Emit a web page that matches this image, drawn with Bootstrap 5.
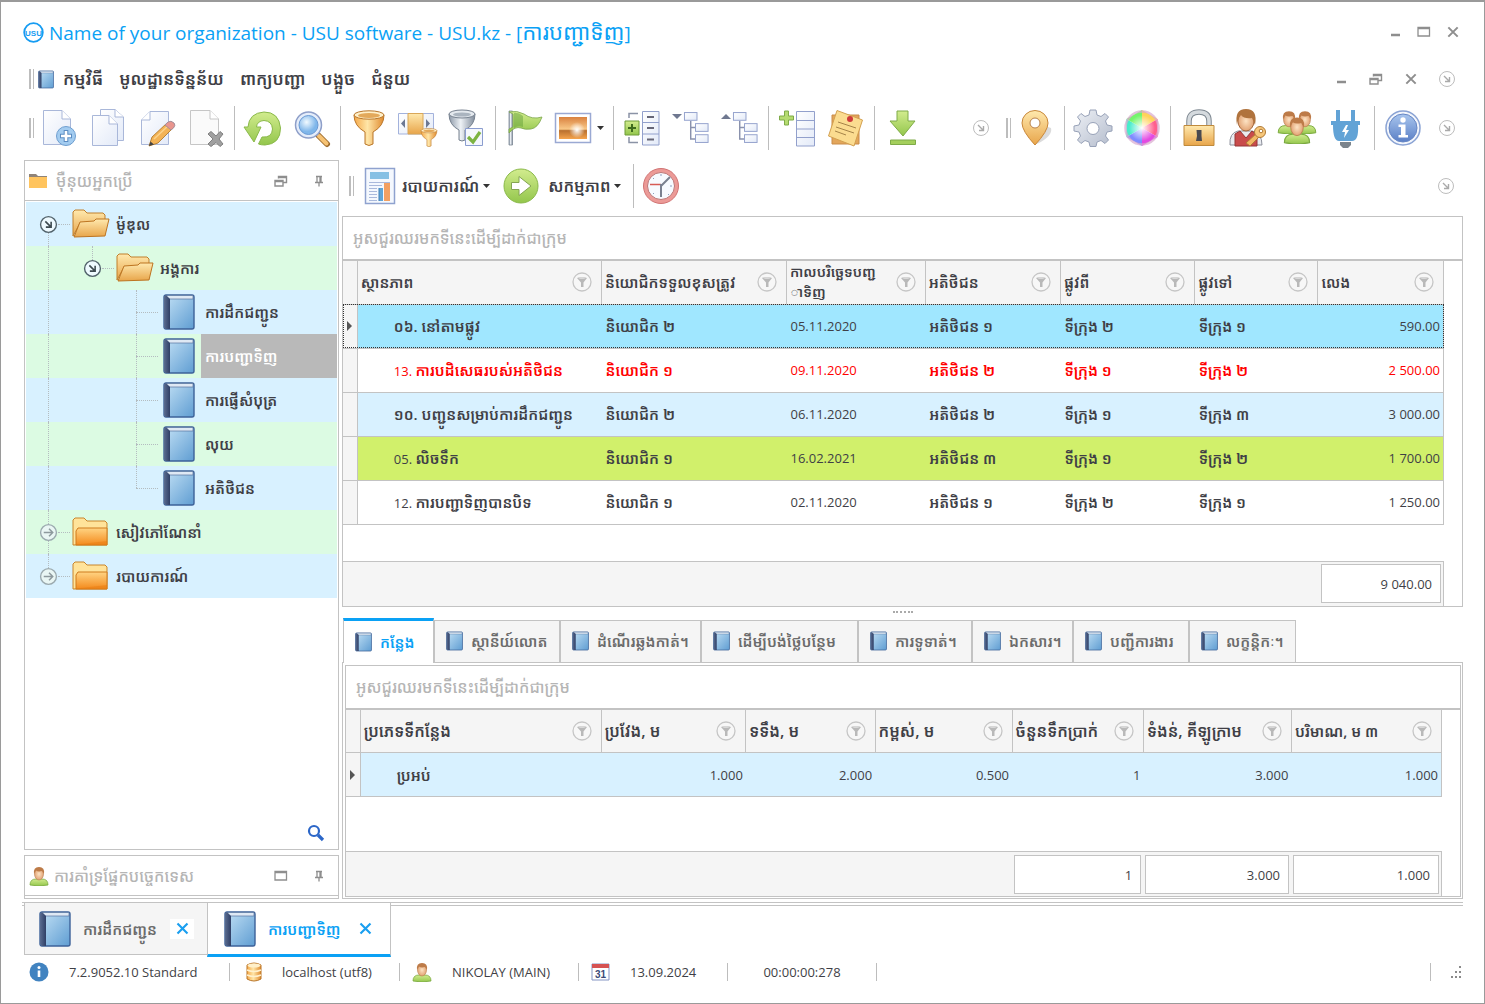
<!DOCTYPE html>
<html lang="km">
<head>
<meta charset="utf-8">
<meta name="viewport" content="width=device-width, initial-scale=1">
<title>USU software</title>
<link href="https://cdn.jsdelivr.net/npm/bootstrap@5.3.0/dist/css/bootstrap.min.css" rel="stylesheet">
<style>
:root{--line:#c3c3c3;--accent:#0aa1f5;--soft:#f5f5f5;--sky:#d8f1ff;--mint:#dcfbe3}
body{font-family:"Open Sans","Noto Sans","Noto Sans Khmer","Khmer OS",sans-serif;font-size:13px;line-height:18px;color:#3f3f46;background:#fff}
.app-window{min-height:100vh;border:1px solid #9a9a9a;border-top-width:2px}
button.plain{background:none;border:0;padding:0;color:inherit;display:inline-flex;align-items:center;justify-content:center;flex:none}
svg{flex:none;display:block}
.kh{font-size:15px;font-weight:600;white-space:nowrap}
.kh-lg{font-size:16px}
.kh-title{font-size:22px}
.kh-two{font-size:14px;line-height:20px}
.muted{color:#b5b5b5;font-weight:500}
.grey-btns{color:#8e8e8e}
.title-bar{height:60px;padding:0 20px 0 22px}
.title-bar h1{font-size:19px;line-height:26px;font-weight:400;color:var(--accent);margin:0 auto 0 5px;white-space:nowrap}
.win-btns{gap:7px}
.menu-bar{height:34px;padding:0 17px 0 28px}
.menu-links{gap:16px;margin:0 auto 0 9px}
.menu-links a{color:#3f3f46;text-decoration:none;font-size:17px}
.menu-btns{gap:13px;padding-right:5px}
.more-slot{width:40px}
.grip{width:5px;height:20px;border:solid #bdbdbd;border-width:0 1px;border-left-width:2px;flex:none}
.tool-bar{height:64px;padding:0 17px 0 28px}
.tool{width:49px;height:44px}
.tool-wide{width:61px;height:44px;gap:5px}
.sep{width:8px;height:44px;display:flex;justify-content:center;flex:none}
.sep::before{content:"";width:1px;background:#bdbdbd}
.work{padding:0 21px 0 23px;gap:3px}
.main-col{min-width:0}
.side{width:315px;flex:none;gap:5px}
.box{border:1px solid var(--line)}
.pane-head{height:40px;padding:0 12px 0 4px;gap:5px;border-bottom:1px solid var(--line)}
.pane-head .kh{font-size:16px}
.pane-btns{gap:24px}
.tree{padding:1px}
.tree-row{height:44px;background:var(--sky)}
.tree-row:nth-child(even){background:var(--mint)}
.tree-row .kh{padding-left:6px}
.tree-row .leaf{margin:0 6px 0 5px}
.tree-row .open{margin-left:2px}
.tree-row .shut{margin:0 2px}
.tree-row .leaf + .kh{padding-left:4px}
.guide{width:44px;height:44px;position:relative;display:flex;align-items:center;justify-content:center;flex:none}
.guide svg{position:relative}
.gv::before,.gt::before,.gb::before{content:"";position:absolute;left:22px;top:0;bottom:0;border-left:1px dotted #b4bcc0}
.gt::before{bottom:50%}
.gb::before{top:50%}
.gh::after{content:"";position:absolute;left:22px;right:0;top:22px;border-top:1px dotted #b4bcc0}
.guide.round::after{left:32px}
.picked{background:#b9b9b9;color:#fff;align-self:stretch;flex:1;display:flex;align-items:center}
.find-row{height:32px;padding-right:13px}
.low-pane{padding-bottom:2px}
.report-bar{height:52px;padding:0 0 0 7px;margin-bottom:4px}
.report-bar .kh{font-size:16px}
.group-hint{height:44px;padding:0 10px;border-bottom:2px solid var(--line)}
.grid-wrap{padding-right:18px}
.grid-tbl{width:100%;table-layout:fixed;border-collapse:collapse;margin:0}
.grid-tbl th,.grid-tbl td{padding:0 4px;overflow:hidden;white-space:nowrap}
.grid-tbl th{height:43px;background:var(--soft);border:1px solid var(--line);border-top:0;border-left-width:0;padding:0 9px 0 3px}
.grid-tbl tbody tr{height:44px;border-bottom:1px solid var(--line)}
.grid-tbl tbody{border-right:1px solid var(--line)}
.grid-tbl td.mark-col{background:var(--soft);border-right:1px solid var(--line);padding:0}
.grid-tbl td.mark-col svg{margin:auto}
.grid-tbl td.lead-cell{padding-left:36px}
.grid-tbl td.num{text-align:right;padding-right:3px}
.r-focus{background:#a0e7ff;outline:1px dotted #333;outline-offset:-1px}
.r-red{color:#f00}
.r-sky{background:var(--sky)}
.r-lime{background:#d1f06b}
.foot{height:45px;background:var(--soft);border-top:1px solid var(--line);border-right:1px solid var(--line);margin-right:18px}
.grid-tbl.foot-tbl td{height:44px;padding:0 2px}
.sum{border:1px solid var(--line);background:#fff;height:39px;line-height:39px;padding-right:8px;text-align:right}
.splitter{height:11px;display:flex;justify-content:center;align-items:center}
.splitter i{width:20px;border-top:2px dotted #aaa}
.sub-tabs{height:44px;align-items:flex-end;position:relative;padding-left:1px}
.sub-tabs button{height:42px;border:1px solid var(--line);border-bottom:0;background:var(--soft);color:#6b6b6b;justify-content:flex-start;padding:0 0 0 11px;gap:8px;overflow:hidden}
.sub-tabs button.on{height:45px;border-top:3px solid var(--accent);background:#fff;color:var(--accent);margin-bottom:-1px}
.w91{width:91px}.w126{width:126px}.w141{width:141px}.w157{width:157px}.w114{width:114px}.w101{width:101px}.w116{width:116px}.w107{width:107px}
.detail{border:1px solid var(--line);padding:2px 1px 1px 2px}
.filler{min-height:36px}
.doc-strip{margin:3px 21px 0 21px;border-top:1px solid var(--line);position:relative}
.doc-strip::before{content:"";position:absolute;left:0;right:0;top:2px;border-top:1px solid var(--line)}
.doc-tabs{position:relative;padding-left:2px}
.doc-tab{height:52px;border:1px solid var(--line);border-top:0;background:var(--soft);color:#6b6b6b;padding:0 13px 0 14px;width:184px}
.doc-tab.on{height:54px;background:#fff;color:var(--accent);border-bottom:3px solid var(--accent);width:184px;margin-left:-1px;padding-left:16px}
.doc-tab .plain{background:#fff;width:24px;height:20px;color:#1a9ff0}
.status{height:30px;padding:0 21px 0 28px}
.status .cell{border-right:1px solid #bdbdbd;height:18px;display:flex;align-items:center;flex:none}
</style>
</head>
<body>
<svg width="0" height="0" class="position-absolute" aria-hidden="true">
<defs>
<linearGradient id="gPage" x2="1" y2="1"><stop stop-color="#fff"/><stop offset="1" stop-color="#e3eaf8"/></linearGradient>
<linearGradient id="gBlue" x2="1" y2="1"><stop stop-color="#c4e2f6"/><stop offset="1" stop-color="#5f9dd2"/></linearGradient>
<linearGradient id="gSpine"><stop stop-color="#5a6c90"/><stop offset="1" stop-color="#2f3f66"/></linearGradient>
<linearGradient id="gGold" x2="0" y2="1"><stop stop-color="#ffe9ae"/><stop offset="1" stop-color="#e8a54a"/></linearGradient>
<linearGradient id="gGoldH"><stop stop-color="#f5a848"/><stop offset=".45" stop-color="#ffe6a8"/><stop offset="1" stop-color="#e08a2e"/></linearGradient>
<linearGradient id="gGreen" x2="0" y2="1"><stop stop-color="#d2ec8e"/><stop offset="1" stop-color="#93c64c"/></linearGradient>
<linearGradient id="gSteel"><stop stop-color="#8d99a8"/><stop offset=".45" stop-color="#eef2f6"/><stop offset="1" stop-color="#7f8b9a"/></linearGradient>
<linearGradient id="gGear" x2="1" y2="1"><stop stop-color="#eef1f6"/><stop offset="1" stop-color="#b4bccc"/></linearGradient>
<linearGradient id="gOrange" x2="0" y2="1"><stop stop-color="#ffd483"/><stop offset="1" stop-color="#f48a1c"/></linearGradient>
<linearGradient id="gInfo" x2="0" y2="1"><stop stop-color="#a9c6ee"/><stop offset="1" stop-color="#5a7fc6"/></linearGradient>
<linearGradient id="gSun" x2="0" y2="1"><stop stop-color="#d9813f"/><stop offset=".55" stop-color="#f9c887"/><stop offset=".62" stop-color="#b9702f"/><stop offset="1" stop-color="#f5a44d"/></linearGradient>
<radialGradient id="gFace"><stop stop-color="#fde3c4"/><stop offset="1" stop-color="#e2a374"/></radialGradient>
<radialGradient id="gLens" cx=".4" cy=".35"><stop stop-color="#f2faff"/><stop offset="1" stop-color="#7fb6ea"/></radialGradient>
<radialGradient id="gWhite"><stop stop-color="#fff"/><stop offset="1" stop-color="#fff" stop-opacity="0"/></radialGradient>
<symbol id="book" viewBox="0 0 32 36"><rect x="1" y="1" width="30" height="34" rx="2" fill="url(#gBlue)" stroke="#3d6299" stroke-width="1.400"/><path d="M2 5 4 1.500H30V5Z" fill="#dfe9f4" stroke="#58749e" stroke-width=".7"/><path d="M1 2.500 3 1 7 5V35H2.500L1 33Z" fill="url(#gSpine)"/></symbol>
<symbol id="openf" viewBox="0 0 38 30"><path d="M1 27V3L3 1H12L15 4H31L33 6V14H8Z" fill="url(#gGold)" stroke="#c07f2b"/><path d="M2 28 8 13 22 12 24 10H37L33 27Z" fill="url(#gGold)" stroke="#bd7421"/></symbol>
<symbol id="closedf" viewBox="0 0 36 30"><path d="M1 28V3L3 1H12L15 4H33L35 6V28Z" fill="#ffe39a" stroke="#c9852a"/><path d="M4 28V14L6 11H35V28Z" fill="url(#gOrange)" stroke="#cf7a1c"/><path d="M1 28H35V24L1 28Z" fill="#e77c12" opacity=".5"/></symbol>
<symbol id="more" viewBox="0 0 18 18"><circle cx="9" cy="9" r="7.500" fill="#fff" stroke="#bdbdbd"/><path d="M6 6 11 11M7 11.500H11.500V7" fill="none" stroke="#aaa" stroke-width="1.400"/></symbol>
<symbol id="expd" viewBox="0 0 18 18"><circle cx="9" cy="9" r="7.500" fill="#eefaff" stroke="#50616a" stroke-width="1.300"/><path d="M6 6 11 11M6.500 11.500H11.500V6.500" fill="none" stroke="#3d4a50" stroke-width="1.500"/></symbol>
<symbol id="expr" viewBox="0 0 18 18"><circle cx="9" cy="9" r="7.500" fill="#e9f6f4" stroke="#9aa9ae" stroke-width="1.300"/><path d="M4.500 9H13M9.500 5.500 13 9 9.500 12.500" fill="none" stroke="#8d999d" stroke-width="1.400"/></symbol>
<symbol id="filt" viewBox="0 0 20 20"><circle cx="10" cy="10" r="9" fill="#f7f7f7" stroke="#c6c6c6" stroke-width="1.300"/><path d="M5 6Q10 4 15 6L11.500 10.500V15H9V10.500Z" fill="#b9b9b9"/><ellipse cx="10" cy="6" rx="3.500" ry=".7" fill="#e2e2e2"/></symbol>
<symbol id="cascade" viewBox="0 0 14 12"><path d="M4.500 3.500V1.500H12.500V7.500H9.500M4.500 2.500H12.500M1 5.500H9V11H1ZM1 6.500H9" fill="none" stroke="#8e8e8e" stroke-width="1.400"/></symbol>
<symbol id="maxi" viewBox="0 0 14 12"><path d="M1 1.500H12.500V10H1ZM1 2.500H12.500" fill="none" stroke="#8e8e8e" stroke-width="1.300"/></symbol>
<symbol id="mini" viewBox="0 0 14 12"><path d="M3 9H12" stroke="#8e8e8e" stroke-width="2.500"/></symbol>
<symbol id="cross" viewBox="0 0 12 12"><path d="M2 2 10 10M10 2 2 10" stroke="currentColor" stroke-width="1.700"/></symbol>
<symbol id="pin" viewBox="0 0 12 12"><path d="M3 1.500H9M4 1.500V7M8 1.500V7M7 2V7M2 7.500H10M6 7V11.500" fill="none" stroke="#8e8e8e" stroke-width="1.300"/></symbol>
<symbol id="caret" viewBox="0 0 7 4"><path d="M0 0H7L3.500 4Z" fill="#333"/></symbol>
<symbol id="rowmark" viewBox="0 0 5 10"><path d="M0 0 5 5 0 10Z" fill="#555"/></symbol>
<symbol id="page" viewBox="0 0 40 40"><path d="M4.500 2.500H23L31.500 11V36.500H4.500Z" fill="url(#gPage)" stroke="#a9b7d9"/><path d="M23 2.500V11H31.500" fill="#fff" stroke="#a9b7d9"/></symbol>
<symbol id="user" viewBox="0 0 20 20"><path d="M1 19Q1 13 7 13H13Q19 13 19 19Q10 21 1 19Z" fill="url(#gGreen)" stroke="#7aa93f" stroke-width=".8"/><ellipse cx="10" cy="8" rx="4.500" ry="6" fill="url(#gFace)" stroke="#b97c4f" stroke-width=".6"/><path d="M5 8Q4 1 10 1Q16 1 15 8L13 5Q9 6 7 4.500Z" fill="#bd7b48"/></symbol>
<symbol id="funnel" viewBox="0 0 32 36"><path d="M1 5Q1 16 12 22V34Q16 37 20 34V22Q31 16 31 5Z" fill="url(#gGoldH)" stroke="#b9762a"/><ellipse cx="16" cy="5" rx="15" ry="4.200" fill="#fff0c9" stroke="#b9762a"/><ellipse cx="16" cy="5.500" rx="11" ry="2.500" fill="#e3a95b"/></symbol>
<symbol id="nodes" viewBox="0 0 28 34"><path d="M8 10V29H13M8 17H13" fill="none" stroke="#8a92ad" stroke-width="1.500"/><g fill="url(#gPage)" stroke="#92a0cc"><rect x="1.500" y="1.500" width="13" height="8"/><rect x="13" y="13" width="13" height="8"/><rect x="13" y="24.500" width="13" height="8"/></g></symbol>
</defs>
</svg>
<div class="app-window d-flex flex-column">

<header class="title-bar d-flex align-items-center">
  <svg width="21" height="21" viewBox="0 0 21 21"><circle cx="10.500" cy="10.500" r="9.300" fill="#fff" stroke="#169cf2" stroke-width="1.800"/><text x="10.500" y="13.500" font-family="Liberation Sans" font-weight="700" font-size="8" fill="#169cf2" text-anchor="middle">USU</text></svg>
  <h1>Name of your organization - USU software - USU.kz - [<span class="kh-title">ការបញ្ជាទិញ</span>]</h1>
  <div class="win-btns grey-btns d-flex">
    <button class="plain p-1" aria-label="Minimize"><svg width="14" height="12"><use href="#mini"/></svg></button>
    <button class="plain p-1" aria-label="Maximize"><svg width="14" height="12"><use href="#maxi"/></svg></button>
    <button class="plain p-1" aria-label="Close"><svg width="14" height="14"><use href="#cross"/></svg></button>
  </div>
</header>

<nav class="menu-bar d-flex align-items-center">
  <span class="grip"></span>
  <svg width="16" height="19" class="ms-1"><use href="#book"/></svg>
  <div class="menu-links d-flex">
    <a href="#" class="kh">កម្មវិធី</a><a href="#" class="kh">មូលដ្ឋានទិន្នន័យ</a><a href="#" class="kh">ពាក្យបញ្ជា</a><a href="#" class="kh">បង្អួច</a><a href="#" class="kh">ជំនួយ</a>
  </div>
  <div class="menu-btns grey-btns d-flex">
    <button class="plain px-1" aria-label="Minimize document"><svg width="14" height="12"><use href="#mini"/></svg></button>
    <button class="plain px-1" aria-label="Restore document"><svg width="14" height="12"><use href="#cascade"/></svg></button>
    <button class="plain px-1" aria-label="Close document"><svg width="14" height="14"><use href="#cross"/></svg></button>
  </div>
  <button class="plain more-slot" aria-label="More"><svg width="18" height="18"><use href="#more"/></svg></button>
</nav>

<div class="tool-bar d-flex align-items-center">
  <span class="grip"></span>
  <button class="plain tool" aria-label="Add"><svg width="40" height="40" viewBox="0 0 40 40"><use href="#page" width="40" height="40"/><circle cx="27" cy="28" r="9.500" fill="#a3ccf0" stroke="#6f9fd0"/><path d="M27 22V34M21 28H33" stroke="#5a8cc2" stroke-width="4.600"/><path d="M27 23V33M22 28H32" stroke="#fff" stroke-width="2.600"/></svg></button>
  <button class="plain tool" aria-label="Copy"><svg width="40" height="40" viewBox="0 0 40 40"><path d="M12.500 1.500H27L35.500 9V32.500H12.500Z" fill="url(#gPage)" stroke="#a9b7d9"/><path d="M27 1.500V9H35.500" fill="#fff" stroke="#a9b7d9"/><path d="M4.500 7.500H21L29.500 16V37.500H4.500Z" fill="url(#gPage)" stroke="#a9b7d9"/><path d="M21 7.500V16H29.500" fill="#fff" stroke="#a9b7d9"/></svg></button>
  <button class="plain tool" aria-label="Edit"><svg width="40" height="40" viewBox="0 0 40 40"><path d="M13 3.500H31.500V36.500H4.500V12Z" fill="url(#gPage)" stroke="#a9b7d9"/><path d="M13 3.500V12H4.500" fill="#fff" stroke="#a9b7d9"/><path d="M12 38 15 29 30 15 36 20 21 35Z" fill="#f3b356" stroke="#a8701f" stroke-width=".8"/><path d="M17 31 32 17" stroke="#fbd38c" stroke-width="1.500"/><path d="M12 38 13.500 33.500 17 36.500Z" fill="#444"/><path d="M28 17 31 14Q34 12 37 15 39 17 36.500 20L34 22Z" fill="#e9958e" stroke="#a58e99"/></svg></button>
  <button class="plain tool" aria-label="Delete"><svg width="40" height="40" viewBox="0 0 40 40"><path d="M4.500 2.500H24L32.500 11V36.500H4.500Z" fill="#fafafa" stroke="#c6c6c6"/><path d="M24 2.500V11H32.500" fill="#fff" stroke="#c6c6c6"/><path d="M22 26 25 23.500 30 28 34 23.500 37 26 33 31 37 36 34 38.500 30 34.500 25 38.500 22 36 27 31Z" fill="#a0a0a0" stroke="#7f7f7f"/></svg></button>
  <span class="sep"></span>
  <button class="plain tool" aria-label="Refresh"><svg width="40" height="40" viewBox="0 0 40 40"><path d="M5 19Q6 5 21 4 36 4 37.500 20 37.500 36 22 37 18 37 15.500 36L19 29Q29 30 29.500 21 29 13 21 12.500 14 13 13.500 19H18L11 34 1 19Z" fill="url(#gGreen)" stroke="#8ab94a"/></svg></button>
  <button class="plain tool" aria-label="Search"><svg width="40" height="40" viewBox="0 0 40 40"><path d="M26 27 35 36" stroke="#9c6a2c" stroke-width="6" stroke-linecap="round"/><path d="M27 28 34.500 35.500" stroke="#f6c273" stroke-width="4" stroke-linecap="round"/><circle cx="16.500" cy="17" r="13" fill="#e5edfa" stroke="#8e9fc9" stroke-width="1.500"/><circle cx="16.500" cy="17" r="9.500" fill="url(#gLens)" stroke="#6b9ad4"/></svg></button>
  <span class="sep"></span>
  <button class="plain tool" aria-label="Filter"><svg width="32" height="36"><use href="#funnel"/></svg></button>
  <button class="plain tool" aria-label="Filter column"><svg width="42" height="40" viewBox="0 0 42 40"><path d="M1.500 5.500H36.500V26H1.500Z" fill="url(#gPage)" stroke="#a3b2dc"/><path d="M11 5.500H26V26H11Z" fill="url(#gGold)" stroke="#d9a758"/><path d="M8 11V20L4 15.500ZM29 11V20L33 15.500Z" fill="#6c7894"/><use href="#funnel" x="23" y="20" width="18" height="19"/></svg></button>
  <button class="plain tool" aria-label="Filter check"><svg width="40" height="40" viewBox="0 0 40 40"><path d="M2 6Q2 17 12 22V32Q15 34 18 32V22Q28 17 28 6Z" fill="url(#gSteel)" stroke="#76818f"/><ellipse cx="15" cy="6" rx="13" ry="4" fill="#e4e9ee" stroke="#76818f"/><ellipse cx="15" cy="6.500" rx="9" ry="2" fill="#aab4bf"/><path d="M18.500 20.500H35.500V37.500H18.500Z" fill="#f4f7fd" stroke="#8b9dcf"/><path d="M21 29 26 34 33 24" fill="none" stroke="#7cb342" stroke-width="3.200"/></svg></button>
  <span class="sep"></span>
  <button class="plain tool" aria-label="Flag"><svg width="40" height="40" viewBox="0 0 40 40"><path d="M5 3H8.500V37H5Z" fill="url(#gSteel)" stroke="#7c8894" stroke-width=".8"/><path d="M5 4Q13 2 20 6 28 12 38 9Q34 20 27 21 21 22 17 20 11 18 5 25V21L9 19V6Z" fill="url(#gGreen)" stroke="#7ba64b" stroke-width=".8"/><path d="M10 5Q14 4 19 8V19Q14 17 10 20Z" fill="#5e9c35" opacity=".45"/></svg></button>
  <button class="plain tool-wide" aria-label="Image"><svg width="38" height="34" viewBox="0 0 38 34"><path d="M1.500 2.500H36.500V31.500H1.500Z" fill="#fff" stroke="#9aa9d3" stroke-width="1.500"/><path d="M5 6H33V28H5Z" fill="url(#gSun)"/><circle cx="23" cy="19" r="8" fill="url(#gWhite)"/></svg><svg width="7" height="4"><use href="#caret"/></svg></button>
  <span class="sep"></span>
  <button class="plain tool" aria-label="Expand groups"><svg width="40" height="40" viewBox="0 0 40 40"><path d="M7 10V5.500H16M7 29V34.500H16" fill="none" stroke="#8b93a6" stroke-width="1.500"/><path d="M3 13H17V27H3Z" fill="url(#gGreen)" stroke="#6f9c39"/><path d="M10 16V24M6 20H14" stroke="#3e6a1e" stroke-width="2"/><path d="M20.500 3.500H37V37H20.500ZM20.500 14.500H37M20.500 26H37" fill="url(#gPage)" stroke="#92a0cc"/><path d="M25 9H32M25 20H32M25 31.500H32" stroke="#667" stroke-width="2"/></svg></button>
  <button class="plain tool" aria-label="Expand tree"><svg width="40" height="40" viewBox="0 0 40 40"><path d="M1 6H11L6 11Z" fill="#6f7890"/><use href="#nodes" x="12" y="3" width="27" height="33"/></svg></button>
  <button class="plain tool" aria-label="Collapse tree"><svg width="40" height="40" viewBox="0 0 40 40"><path d="M1 11H11L6 6Z" fill="#6f7890"/><use href="#nodes" x="12" y="3" width="27" height="33"/></svg></button>
  <span class="sep"></span>
  <button class="plain tool" aria-label="Add column"><svg width="40" height="40" viewBox="0 0 40 40"><path d="M7.500 3H11.500V8H16.500V12H11.500V17H7.500V12H2.500V8H7.500Z" fill="#b5db70" stroke="#7fab48"/><path d="M19.500 3.500H37.500V38H19.500ZM19.500 12.500H37.500M19.500 21H37.500M19.500 29.500H37.500" fill="url(#gPage)" stroke="#92a0cc"/></svg></button>
  <button class="plain tool" aria-label="Notes"><svg width="40" height="40" viewBox="0 0 40 40"><path d="M6 7H33V36H6Z" fill="#e3a65b" stroke="#c98c48"/><path d="M11 2.500 36.500 12 28 38 2.500 28Z" fill="#fbdc90" stroke="#d3a050"/><path d="M12 14 30 20M10 19 28 25M9 23 20 27" stroke="#a58348"/><circle cx="24" cy="11" r="3" fill="#cf3b3b"/></svg></button>
  <span class="sep"></span>
  <button class="plain tool" aria-label="Download"><svg width="30" height="38" viewBox="0 0 30 38"><path d="M9 2H20V12H27L15 27 2 12H9Z" fill="url(#gGreen)" stroke="#7fab48"/><path d="M2.500 31H27.500V35.500H2.500Z" fill="#a4cf5c" stroke="#7fab48"/></svg></button>
  <button class="plain ms-auto" aria-label="More tools"><svg width="18" height="18"><use href="#more"/></svg></button>
  <span class="grip ms-3"></span>
  <button class="plain tool" aria-label="Location"><svg width="34" height="40" viewBox="0 0 34 40"><path d="M18 36Q34 28 32 20L26 18Z" fill="#999" opacity=".35"/><path d="M16 37Q3 23 3 15A13 12.500 0 0 1 29 15Q29 23 16 37Z" fill="url(#gGold)" stroke="#c8873a"/><circle cx="16" cy="15" r="5" fill="#fff" stroke="#b9824a"/></svg></button>
  <span class="sep"></span>
  <button class="plain tool" aria-label="Settings"><svg width="40" height="40" viewBox="0 0 40 40"><path d="M17 2H23L24 7 28 8.500 32 5.500 35.500 9 32.500 13 34 17 39 18V23L34 24 32.500 28 35.500 32 32 35.500 28 32.500 24 34 23 38.500H17L16 34 12 32.500 8 35.500 4.500 32 7.500 28 6 24 1 23V18L6 17 7.500 13 4.500 9 8 5.500 12 8.500 16 7Z" fill="url(#gGear)" stroke="#98a2b8"/><circle cx="20" cy="20.500" r="6" fill="#fff" stroke="#98a2b8"/></svg></button>
  <button class="plain tool" aria-label="Colors"><svg width="38" height="38" viewBox="-19 -19 38 38"><path d="M0 0V-18L15.600-9Z" fill="#ffd35a"/><path d="M0 0 15.600-9V9Z" fill="#ff5f8d"/><path d="M0 0 15.600 9 0 18Z" fill="#e34ae2"/><path d="M0 0V18L-15.600 9Z" fill="#7f8cff"/><path d="M0 0-15.600 9V-9Z" fill="#48eccb"/><path d="M0 0-15.600-9 0-18Z" fill="#74f56c"/><circle r="16.500" fill="none" stroke="#d9a9cf" stroke-width="2.500" opacity=".7"/><circle r="13" fill="url(#gWhite)"/></svg></button>
  <span class="sep"></span>
  <button class="plain tool" aria-label="Lock"><svg width="34" height="40" viewBox="0 0 34 40"><path d="M7 18V13Q7 4 17 4T27 13V18" fill="none" stroke="#7d8790" stroke-width="5.500"/><path d="M7 18V13Q7 4 17 4T27 13V18" fill="none" stroke="#d5dade" stroke-width="3.500"/><path d="M2 17.500H32V37.500H2Z" fill="url(#gGold)" stroke="#c08a3c"/><path d="M14.500 22H19.500V28L20 33H14L15 28Z" fill="#4a4a50"/></svg></button>
  <button class="plain tool" aria-label="User rights"><svg width="40" height="40" viewBox="0 0 40 40"><path d="M2 37Q1 25 10 23H24Q34 25 34 37Z" fill="#e9ebf0" stroke="#8c8f9a"/><path d="M7 38V26L12 23 18 30 24 23 29 27V38Z" fill="#c94b4b" stroke="#963737"/><ellipse cx="18" cy="13" rx="8" ry="10" fill="url(#gFace)" stroke="#a5683c"/><path d="M9 17Q6 1 18 1Q30 1 27 17L24 10Q16 11 13 7 10 10 9 17Z" fill="#b0733d"/><path d="M18 35 30 24 33 27 22 38Z" fill="#f2b765" stroke="#b07a35"/><circle cx="32" cy="24" r="5.500" fill="#f7c77b" stroke="#b07a35"/><circle cx="33" cy="23" r="1.800" fill="#fff" stroke="#b07a35"/></svg></button>
  <button class="plain tool" aria-label="Users"><svg width="40" height="40" viewBox="0 0 40 40"><use href="#user" x="0" y="2" width="24" height="24"/><use href="#user" x="16" y="2" width="24" height="24"/><use href="#user" x="6" y="8" width="28" height="28"/></svg></button>
  <button class="plain tool" aria-label="Connection"><svg width="40" height="42" viewBox="0 0 40 42"><path d="M12 3V15M27 3V15" stroke="#62a3d6" stroke-width="4"/><path d="M5 14H34V18H32Q33 34 26 34H13Q7 34 7 18H5Z" fill="#62a3d6"/><path d="M14 35H25V38L22 41H17L14 38Z" fill="#7b848c"/><path d="M20 18 16 25H19L18 31 23 23H20L22 18Z" fill="#fff"/></svg></button>
  <span class="sep"></span>
  <button class="plain tool" aria-label="Info"><svg width="38" height="38" viewBox="0 0 38 38"><circle cx="19" cy="19" r="17" fill="#f3f6fc" stroke="#8aa3d4" stroke-width="1.500"/><circle cx="19" cy="19" r="14" fill="url(#gInfo)" stroke="#6787c4"/><circle cx="19" cy="11" r="2.700" fill="#fff"/><path d="M14.500 15.500H21.500V26H24V28.500H14.500V26H17V18H14.500Z" fill="#fff"/></svg></button>
  <button class="plain more-slot" aria-label="More"><svg width="18" height="18"><use href="#more"/></svg></button>
</div>

<main class="work d-flex flex-grow-1">
  <aside class="side d-flex flex-column">
    <section class="box d-flex flex-column flex-grow-1">
      <div class="pane-head d-flex align-items-center">
        <svg width="18" height="16" viewBox="0 0 18 16"><path d="M0 1H7L9 3H18V6H0Z" fill="#8f8378"/><path d="M0 4H18V15H0Z" fill="#ffc45e"/></svg>
        <span class="kh muted me-auto ps-1">ម៉ឺនុយអ្នកប្រើ</span>
        <span class="pane-btns d-flex"><button class="plain" aria-label="Float"><svg width="14" height="12"><use href="#cascade"/></svg></button>
        <button class="plain" aria-label="Pin"><svg width="14" height="12"><use href="#pin"/></svg></button></span>
      </div>
      <div class="tree">
        <div class="tree-row d-flex align-items-center"><span class="guide gb gh round"><svg width="19" height="19"><use href="#expd"/></svg></span><svg width="38" height="30" class="open"><use href="#openf"/></svg><span class="kh">ម៉ូឌុល</span></div>
        <div class="tree-row d-flex align-items-center"><span class="guide gv"></span><span class="guide gt gh round"><svg width="19" height="19"><use href="#expd"/></svg></span><svg width="38" height="30" class="open"><use href="#openf"/></svg><span class="kh">អង្គការ</span></div>
        <div class="tree-row d-flex align-items-center"><span class="guide gv"></span><span class="guide"></span><span class="guide gv gh"></span><svg width="32" height="36" class="leaf"><use href="#book"/></svg><span class="kh">ការដឹកជញ្ជូន</span></div>
        <div class="tree-row d-flex align-items-center"><span class="guide gv"></span><span class="guide"></span><span class="guide gv gh"></span><svg width="32" height="36" class="leaf"><use href="#book"/></svg><span class="kh picked">ការបញ្ជាទិញ</span></div>
        <div class="tree-row d-flex align-items-center"><span class="guide gv"></span><span class="guide"></span><span class="guide gv gh"></span><svg width="32" height="36" class="leaf"><use href="#book"/></svg><span class="kh">ការផ្ញើសំបុត្រ</span></div>
        <div class="tree-row d-flex align-items-center"><span class="guide gv"></span><span class="guide"></span><span class="guide gv gh"></span><svg width="32" height="36" class="leaf"><use href="#book"/></svg><span class="kh">លុយ</span></div>
        <div class="tree-row d-flex align-items-center"><span class="guide gv"></span><span class="guide"></span><span class="guide gt gh"></span><svg width="32" height="36" class="leaf"><use href="#book"/></svg><span class="kh">អតិថិជន</span></div>
        <div class="tree-row d-flex align-items-center"><span class="guide gv gh round"><svg width="19" height="19"><use href="#expr"/></svg></span><svg width="36" height="30" class="shut"><use href="#closedf"/></svg><span class="kh">សៀវភៅណែនាំ</span></div>
        <div class="tree-row d-flex align-items-center"><span class="guide gt gh round"><svg width="19" height="19"><use href="#expr"/></svg></span><svg width="36" height="30" class="shut"><use href="#closedf"/></svg><span class="kh">របាយការណ៍</span></div>
      </div>
      <div class="find-row mt-auto d-flex justify-content-end align-items-center"><button class="plain" aria-label="Find in menu"><svg width="18" height="18" viewBox="0 0 18 18"><circle cx="7" cy="7" r="5" fill="#fff" stroke="#2b66c8" stroke-width="2.200"/><path d="M11 11 16 16" stroke="#2b66c8" stroke-width="3.200"/></svg></button></div>
    </section>
    <section class="box low-pane">
      <div class="pane-head d-flex align-items-center">
        <svg width="20" height="20"><use href="#user"/></svg>
        <span class="kh muted me-auto">ការគាំទ្រផ្នែកបច្ចេកទេស</span>
        <span class="pane-btns d-flex"><button class="plain" aria-label="Maximize pane"><svg width="14" height="12"><use href="#maxi"/></svg></button>
        <button class="plain" aria-label="Pin pane"><svg width="14" height="12"><use href="#pin"/></svg></button></span>
      </div>
    </section>
  </aside>

  <section class="main-col d-flex flex-column flex-grow-1">
    <div class="report-bar d-flex align-items-center">
      <span class="grip me-2"></span>
      <button class="plain gap-1"><svg width="36" height="38" viewBox="0 0 36 38"><path d="M3.500 1.500H32.500V36.500H3.500Z" fill="#f4f8fe" stroke="#8fa2cf" stroke-width="1.500"/><path d="M8 5H27V12H8Z" fill="#86c0e4"/><path d="M7 15.500H28M7 18.500H20M7 21.500H15M7 24.500H15M7 27.500H15M7 30.500H15M7 33.500H15" stroke="#a9b9dc"/><path d="M17 21H21V34H17Z" fill="#5fa5d6"/><path d="M22 16H28V34H22Z" fill="#f2a062"/><path d="M17 21V34" stroke="#3f7fb5"/></svg><span class="kh">របាយការណ៍</span><svg width="7" height="4"><use href="#caret"/></svg></button>
      <button class="plain gap-1 ms-2 ps-1"><svg width="38" height="38" viewBox="0 0 38 38" class="me-1"><circle cx="19" cy="19" r="17" fill="url(#gGreen)" stroke="#8ab94a"/><path d="M9.500 15.500H17V9.500L29 19 17 28.500V22.500H9.500Z" fill="#fff" stroke="#84a552"/></svg><span class="kh">សកម្មភាព</span><svg width="7" height="4"><use href="#caret"/></svg></button>
      <span class="sep ms-2"></span>
      <button class="plain ms-1" aria-label="Reminders"><svg width="40" height="40" viewBox="0 0 40 40"><circle cx="20" cy="20" r="17.500" fill="#ec9a97" stroke="#d17474"/><circle cx="20" cy="20" r="13.500" fill="#f7faff" stroke="#b77"/><path d="M9 18.500H20" stroke="#d65a55" stroke-width="1.500"/><path d="M20 20 29 11M20 18V31" stroke="#7a8090" stroke-width="2"/><path d="M20 8V10M31 20H29M12 12 13 13M27 28 28 29M12 28 13 27" stroke="#8ba0c0"/></svg></button>
      <button class="plain ms-auto pe-2" aria-label="More"><svg width="18" height="18"><use href="#more"/></svg></button>
    </div>

    <section class="box">
      <div class="group-hint d-flex align-items-center"><span class="kh kh-lg muted">អូសជួរឈរមកទីនេះដើម្បីដាក់ជាក្រុម</span></div>
      <div class="grid-wrap">
      <table class="grid-tbl">
        <colgroup><col style="width:1.300%"><col style="width:22.200%"><col style="width:16.800%"><col style="width:12.600%"><col style="width:12.300%"><col style="width:12.200%"><col style="width:11.200%"><col style="width:11.400%"></colgroup>
        <thead><tr><th></th>
          <th><div class="d-flex align-items-center justify-content-between"><span class="kh">ស្ថានភាព</span><svg width="20" height="20"><use href="#filt"/></svg></div></th>
          <th><div class="d-flex align-items-center justify-content-between"><span class="kh">និយោជិកទទួលខុសត្រូវ</span><svg width="20" height="20"><use href="#filt"/></svg></div></th>
          <th><div class="d-flex align-items-center justify-content-between"><span class="kh kh-two">កាលបរិច្ឆេទបញ្ជ<br>ាទិញ</span><svg width="20" height="20"><use href="#filt"/></svg></div></th>
          <th><div class="d-flex align-items-center justify-content-between"><span class="kh">អតិថិជន</span><svg width="20" height="20"><use href="#filt"/></svg></div></th>
          <th><div class="d-flex align-items-center justify-content-between"><span class="kh">ផ្លូវពី</span><svg width="20" height="20"><use href="#filt"/></svg></div></th>
          <th><div class="d-flex align-items-center justify-content-between"><span class="kh">ផ្លូវទៅ</span><svg width="20" height="20"><use href="#filt"/></svg></div></th>
          <th><div class="d-flex align-items-center justify-content-between"><span class="kh">លេង</span><svg width="20" height="20"><use href="#filt"/></svg></div></th>
        </tr></thead>
        <tbody>
          <tr class="r-focus"><td class="mark-col"><svg width="5" height="10"><use href="#rowmark"/></svg></td><td class="lead-cell"><span class="kh">០៦. នៅតាមផ្លូវ</span></td><td class="kh">និយោជិក ២</td><td>05.11.2020</td><td class="kh">អតិថិជន ១</td><td class="kh">ទីក្រុង ២</td><td class="kh">ទីក្រុង ១</td><td class="num">590.00</td></tr>
          <tr class="r-red"><td class="mark-col"></td><td class="lead-cell">13. <span class="kh">ការបដិសេធរបស់អតិថិជន</span></td><td class="kh">និយោជិក ១</td><td>09.11.2020</td><td class="kh">អតិថិជន ២</td><td class="kh">ទីក្រុង ១</td><td class="kh">ទីក្រុង ២</td><td class="num">2 500.00</td></tr>
          <tr class="r-sky"><td class="mark-col"></td><td class="lead-cell"><span class="kh">១០. បញ្ជូនសម្រាប់ការដឹកជញ្ជូន</span></td><td class="kh">និយោជិក ២</td><td>06.11.2020</td><td class="kh">អតិថិជន ២</td><td class="kh">ទីក្រុង ១</td><td class="kh">ទីក្រុង ៣</td><td class="num">3 000.00</td></tr>
          <tr class="r-lime"><td class="mark-col"></td><td class="lead-cell">05. <span class="kh">លិចទឹក</span></td><td class="kh">និយោជិក ១</td><td>16.02.2021</td><td class="kh">អតិថិជន ៣</td><td class="kh">ទីក្រុង ១</td><td class="kh">ទីក្រុង ២</td><td class="num">1 700.00</td></tr>
          <tr><td class="mark-col"></td><td class="lead-cell">12. <span class="kh">ការបញ្ជាទិញបានបិទ</span></td><td class="kh">និយោជិក ១</td><td>02.11.2020</td><td class="kh">អតិថិជន ១</td><td class="kh">ទីក្រុង ២</td><td class="kh">ទីក្រុង ១</td><td class="num">1 250.00</td></tr>
        </tbody>
      </table>
      </div>
      <div class="filler"></div>
      <div class="foot"><table class="grid-tbl foot-tbl"><colgroup><col><col style="width:11.300%"></colgroup><tbody class="border-0"><tr class="border-0"><td></td><td><div class="sum">9 040.00</div></td></tr></tbody></table></div>
    </section>

    <div class="splitter"><i></i></div>

    <div class="sub-tabs d-flex" role="tablist">
      <button class="plain kh on w91" role="tab"><svg width="17" height="20"><use href="#book"/></svg>កន្លែង</button>
      <button class="plain kh w126" role="tab"><svg width="17" height="20"><use href="#book"/></svg>ស្ថានីយ៍លោត</button>
      <button class="plain kh w141" role="tab"><svg width="17" height="20"><use href="#book"/></svg>ដំណើរឆ្លងកាត់។</button>
      <button class="plain kh w157" role="tab"><svg width="17" height="20"><use href="#book"/></svg>ដើម្បីបង់ថ្លៃបន្ថែម</button>
      <button class="plain kh w114" role="tab"><svg width="17" height="20"><use href="#book"/></svg>ការទូទាត់។</button>
      <button class="plain kh w101" role="tab"><svg width="17" height="20"><use href="#book"/></svg>ឯកសារ។</button>
      <button class="plain kh w116" role="tab"><svg width="17" height="20"><use href="#book"/></svg>បញ្ជីការងារ</button>
      <button class="plain kh w107" role="tab"><svg width="17" height="20"><use href="#book"/></svg>លក្ខន្តិកៈ។</button>
    </div>
    <div class="detail d-flex flex-column flex-grow-1">
    <section class="box d-flex flex-column flex-grow-1">
      <div class="group-hint d-flex align-items-center"><span class="kh kh-lg muted">អូសជួរឈរមកទីនេះដើម្បីដាក់ជាក្រុម</span></div>
      <div class="grid-wrap">
      <table class="grid-tbl">
        <colgroup><col style="width:1.300%"><col style="width:22%"><col style="width:13.200%"><col style="width:11.800%"><col style="width:12.500%"><col style="width:12%"><col style="width:13.500%"><col style="width:13.700%"></colgroup>
        <thead><tr><th></th>
          <th><div class="d-flex align-items-center justify-content-between"><span class="kh kh-lg">ប្រភេទទីកន្លែង</span><svg width="20" height="20"><use href="#filt"/></svg></div></th>
          <th><div class="d-flex align-items-center justify-content-between"><span class="kh kh-lg">ប្រវែង, ម</span><svg width="20" height="20"><use href="#filt"/></svg></div></th>
          <th><div class="d-flex align-items-center justify-content-between"><span class="kh kh-lg">ទទឹង, ម</span><svg width="20" height="20"><use href="#filt"/></svg></div></th>
          <th><div class="d-flex align-items-center justify-content-between"><span class="kh kh-lg">កម្ពស់, ម</span><svg width="20" height="20"><use href="#filt"/></svg></div></th>
          <th><div class="d-flex align-items-center justify-content-between"><span class="kh kh-lg">ចំនួនទឹកប្រាក់</span><svg width="20" height="20"><use href="#filt"/></svg></div></th>
          <th><div class="d-flex align-items-center justify-content-between"><span class="kh kh-lg">ទំងន់, គីឡូក្រាម</span><svg width="20" height="20"><use href="#filt"/></svg></div></th>
          <th><div class="d-flex align-items-center justify-content-between"><span class="kh">បរិមាណ, ម ៣</span><svg width="20" height="20"><use href="#filt"/></svg></div></th>
        </tr></thead>
        <tbody><tr class="r-sky"><td class="mark-col"><svg width="5" height="10"><use href="#rowmark"/></svg></td><td class="lead-cell kh">ប្រអប់</td><td class="num">1.000</td><td class="num">2.000</td><td class="num">0.500</td><td class="num">1</td><td class="num">3.000</td><td class="num">1.000</td></tr></tbody>
      </table>
      </div>
      <div class="flex-grow-1 filler"></div>
      <div class="foot"><table class="grid-tbl foot-tbl"><colgroup><col><col style="width:12%"><col style="width:13.500%"><col style="width:13.700%"></colgroup><tbody class="border-0"><tr class="border-0"><td></td><td><div class="sum">1</div></td><td><div class="sum">3.000</div></td><td><div class="sum">1.000</div></td></tr></tbody></table></div>
    </section>
    </div>
  </section>
</main>

<div class="doc-strip">
  <div class="doc-tabs d-flex">
    <div class="doc-tab d-flex align-items-center"><svg width="32" height="36"><use href="#book"/></svg><a href="#" class="kh ms-2 ps-1 me-auto text-reset text-decoration-none">ការដឹកជញ្ជូន</a><button class="plain" aria-label="Close tab"><svg width="15" height="15"><use href="#cross"/></svg></button></div>
    <div class="doc-tab on d-flex align-items-center"><svg width="32" height="36"><use href="#book"/></svg><a href="#" class="kh ms-2 ps-1 me-auto text-reset text-decoration-none">ការបញ្ជាទិញ</a><button class="plain" aria-label="Close tab"><svg width="15" height="15"><use href="#cross"/></svg></button></div>
  </div>
</div>
<footer class="status d-flex align-items-center mb-3">
  <div class="cell" style="width:201px"><svg width="20" height="20" viewBox="0 0 20 20"><circle cx="10" cy="10" r="9.500" fill="#4183c0"/><circle cx="10" cy="5.500" r="1.500" fill="#fff"/><path d="M10 8.500V15" stroke="#fff" stroke-width="2.600"/></svg><span class="ms-3 ps-1">7.2.9052.10 Standard</span></div>
  <div class="cell ps-3" style="width:170px"><svg width="16" height="20" viewBox="0 0 16 20"><path d="M1 3Q8-1 15 3V17Q8 21 1 17Z" fill="url(#gGoldH)" stroke="#b9762a"/><path d="M1 8Q8 11 15 8M1 13Q8 16 15 13" fill="none" stroke="#fff1cd" stroke-width="1.500"/><ellipse cx="8" cy="3.500" rx="6.500" ry="2" fill="#fff0c9"/></svg><span class="ms-3 ps-1">localhost (utf8)</span></div>
  <div class="cell ps-2" style="width:179px"><svg width="20" height="20" class="ms-1"><use href="#user"/></svg><span class="ms-3 ps-1">NIKOLAY (MAIN)</span></div>
  <div class="cell ps-2" style="width:149px"><svg width="19" height="18" viewBox="0 0 19 18" class="ms-1"><path d="M1 1H18V17H1Z" fill="#fff" stroke="#8595c4"/><path d="M1 1H18V5H1Z" fill="#d65252"/><text x="9.500" y="15" font-size="10" font-weight="700" font-family="Liberation Sans" fill="#3c4a78" text-anchor="middle">31</text></svg><span class="ms-3 ps-1">13.09.2024</span></div>
  <div class="cell justify-content-center" style="width:149px">00:00:00:278</div>
  <div class="cell flex-fill"></div>
  <svg width="16" height="16" viewBox="0 0 16 16" class="ms-3"><path d="M12 2H14V4H12ZM8 7H10V9H8ZM12 7H14V9H12ZM4 12H6V14H4ZM8 12H10V14H8ZM12 12H14V14H12Z" fill="#8a8a8a"/></svg>
</footer>
</div>
<script src="https://cdn.jsdelivr.net/npm/bootstrap@5.3.0/dist/js/bootstrap.bundle.min.js"></script>
</body>
</html>
